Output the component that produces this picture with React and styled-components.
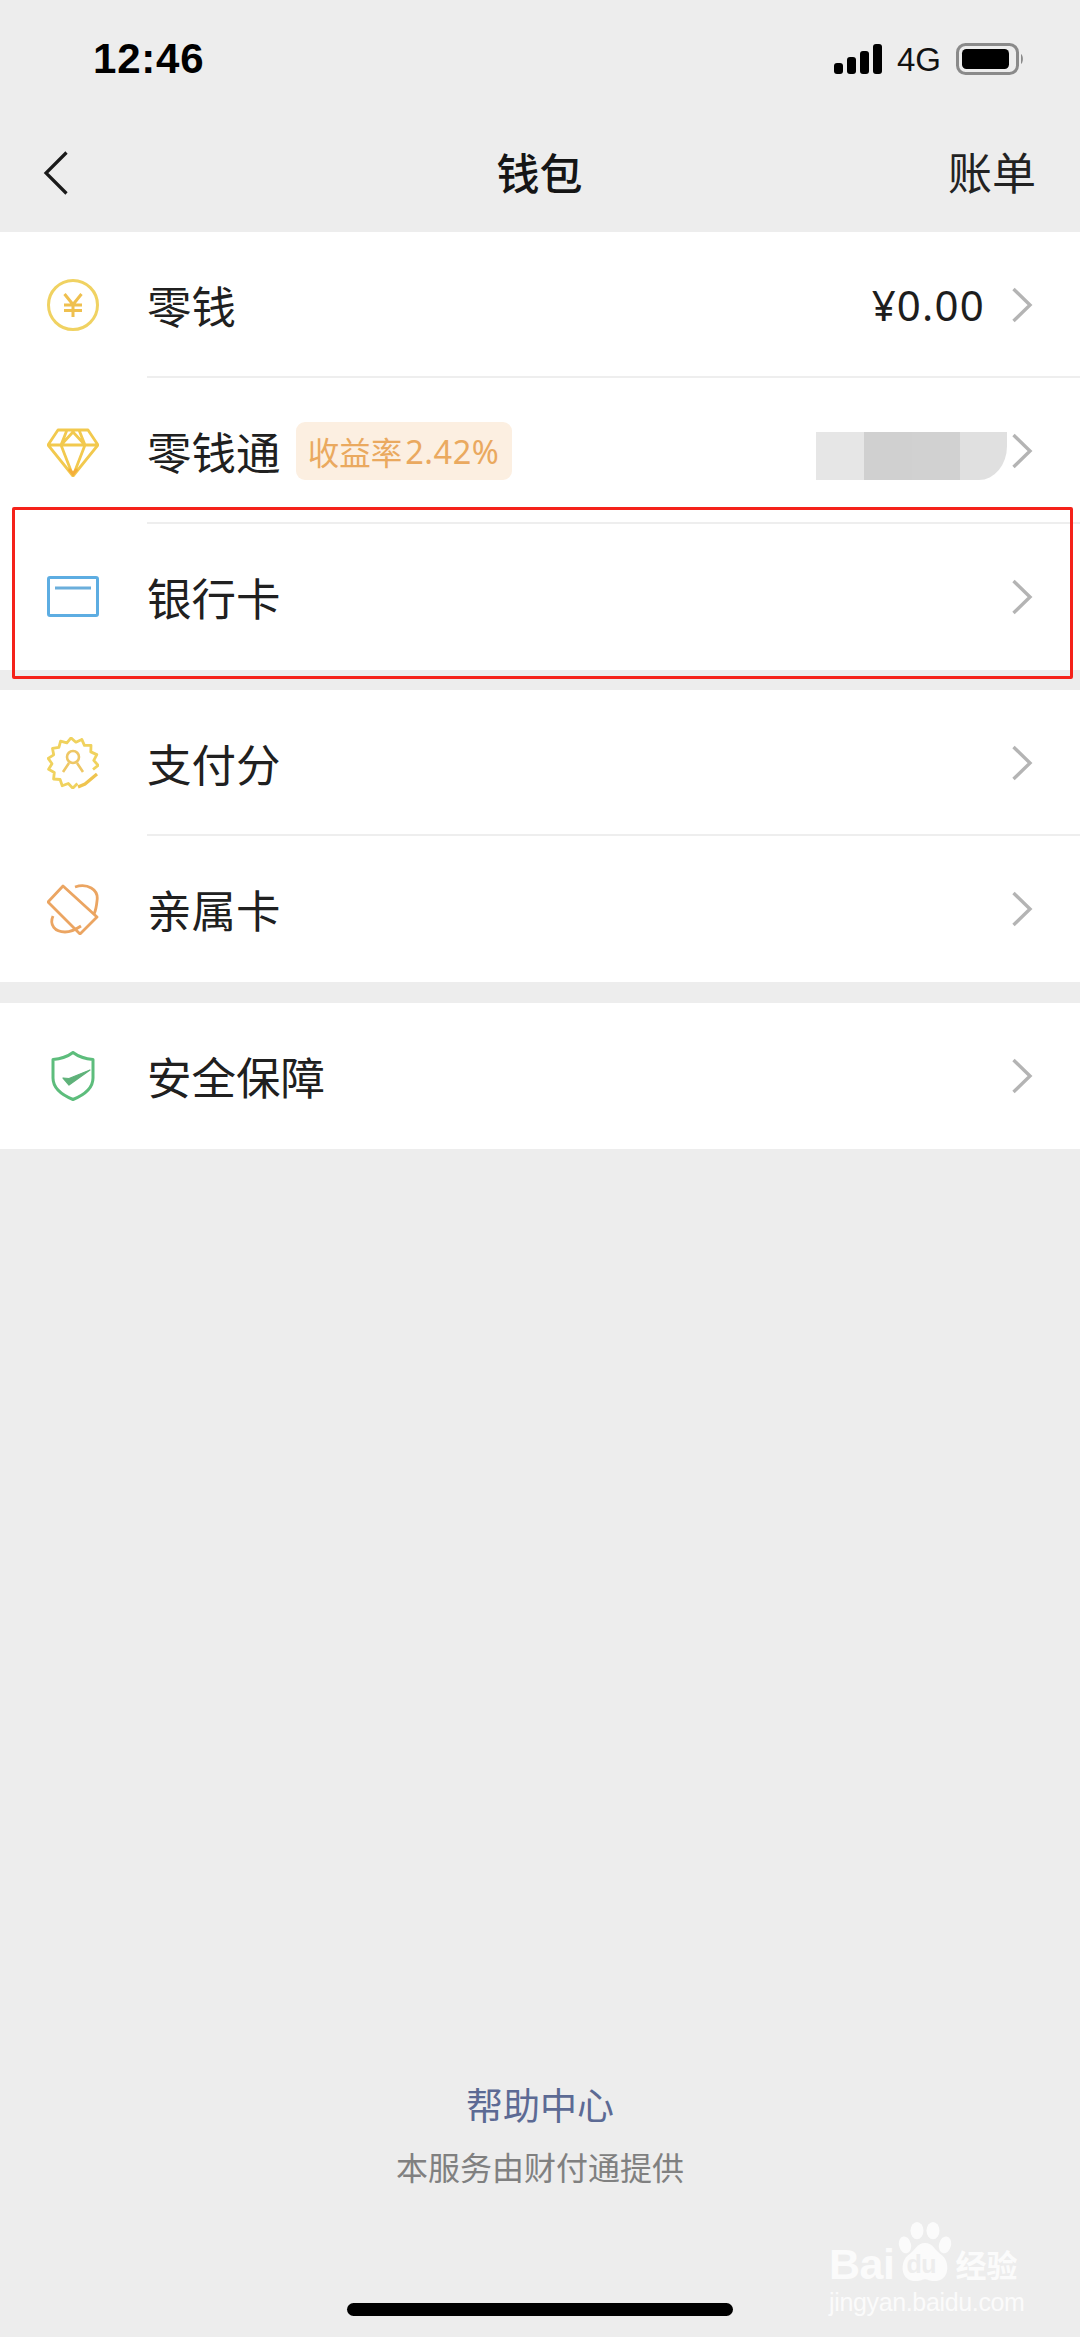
import React from "react";
import styled, { createGlobalStyle } from "styled-components";

const CJK = `"Noto Sans CJK SC", "Liberation Sans", sans-serif`;
const LATIN = `"Liberation Sans", "Noto Sans CJK SC", sans-serif`;
const NOTO = `"Noto Sans", "Liberation Sans", sans-serif`;

const Global = createGlobalStyle`
  html, body { margin: 0; padding: 0; background: #ededed; }
  * { box-sizing: border-box; }
`;

const Page = styled.div`
  position: relative;
  width: 1080px;
  height: 2337px;
  overflow: hidden;
  display: flex;
  flex-direction: column;
  background: #ededed;
  font-family: ${CJK};
  color: #1c1c1c;
`;

const StatusBar = styled.div`
  height: 118px;
  padding: 0 56px 0 93px;
  display: flex;
  align-items: center;
  justify-content: space-between;
  color: #000;
`;
const Clock = styled.span`
  font: 700 42px/1 ${LATIN};
  letter-spacing: 0.8px;
`;
const StatusRight = styled.div`
  display: flex;
  align-items: center;
  gap: 15px;
`;
const Network = styled.span`
  font: 400 33px/1 ${LATIN};
  color: #111;
`;

const NavBar = styled.div`
  height: 114px;
  padding: 0 44px 8px 43px;
  display: grid;
  grid-template-columns: 1fr auto 1fr;
  align-items: center;
  svg { margin-top: 3px; }
`;
const NavTitle = styled.div`
  font-size: 43px;
  font-weight: 500;
  line-height: 1;
  color: #151515;
`;
const NavAction = styled.div`
  justify-self: end;
  font-size: 44px;
  line-height: 1;
  color: #222;
`;

const Group = styled.section`
  background: #fff;
  margin-top: ${(p) => p.$gap || 0}px;
`;
const Row = styled.div`
  height: 146px;
  padding: 0 47px 0 47px;
  display: flex;
  align-items: center;
  position: relative;
  ${(p) =>
    p.$divider
      ? `&::after { content: ""; position: absolute; left: 147px; right: 0; bottom: 0; height: 2px; background: #eeeeee; }`
      : ""}
`;
const IconBox = styled.div`
  width: 52px;
  height: 52px;
  margin-right: 48px;
  flex: none;
  display: flex;
  align-items: center;
  justify-content: center;
`;
const Label = styled.span`
  font-size: 44.5px;
  line-height: 1;
  color: #202020;
`;
const Badge = styled.span`
  margin-left: 15px;
  width: 216px;
  height: 58px;
  border-radius: 9px;
  background: #fcefe1;
  color: #eaa95f;
  font-size: 31.5px;
  display: flex;
  align-items: center;
  justify-content: center;
  white-space: nowrap;
`;
const Percent = styled.span`
  font-family: ${NOTO};
  font-size: 32.5px;
  letter-spacing: 0.5px;
  margin-left: 3px;
`;
const Right = styled.div`
  margin-left: auto;
  display: flex;
  align-items: center;
`;
const Amount = styled.span`
  font: 400 42px/1 ${NOTO};
  letter-spacing: 1.2px;
  color: #1d1d1d;
  margin-right: 26px;
`;
const Censor = styled.div`
  display: flex;
  margin-right: 4px;
  margin-top: 10px;
  height: 48px;
`;
const CensorCell = styled.span`
  width: 48px;
  height: 48px;
  background: ${(p) => p.$tone};
  ${(p) => (p.$round ? "width: 47px; border-bottom-right-radius: 28px 34px;" : "")}
`;

const Footer = styled.footer`
  margin-top: auto;
  padding-bottom: 21px;
  display: flex;
  flex-direction: column;
  align-items: center;
`;
const HelpLink = styled.div`
  font-size: 37px;
  line-height: 1;
  color: #5c6a94;
`;
const Provider = styled.div`
  margin-top: 27px;
  font-size: 32px;
  line-height: 1;
  color: #808080;
`;
const HomeBar = styled.div`
  margin-top: 121px;
  width: 386px;
  height: 13px;
  border-radius: 7px;
  background: #000;
`;

const Highlight = styled.div`
  position: absolute;
  left: 12px;
  top: 507px;
  width: 1061px;
  height: 172px;
  border: 3px solid #f5221a;
  border-radius: 2px;
`;

const Watermark = styled.div`
  position: absolute;
  left: 829px;
  top: 2222px;
  width: 196px;
  color: #fbfbfb;
`;
const MarkTop = styled.div`
  height: 61px;
  display: flex;
  align-items: flex-end;
  position: relative;
`;
const Bai = styled.span`
  font: 700 43px/38px ${LATIN};
  letter-spacing: -0.5px;
`;
const Paw = styled.div`
  width: 54px;
  height: 61px;
  margin: 0 3px 0 4px;
  flex: none;
  position: relative;
`;
const Du = styled.span`
  position: absolute;
  left: 8px;
  bottom: 6px;
  font: 700 25px/1 ${LATIN};
  color: #ededed;
  letter-spacing: -0.5px;
`;
const MarkCn = styled.span`
  font-size: 31px;
  font-weight: 700;
  line-height: 38px;
  white-space: nowrap;
`;
const MarkUrl = styled.div`
  margin-top: 5px;
  font: 400 25px/28px ${LATIN};
  letter-spacing: -0.35px;
  white-space: nowrap;
`;

const Chevron = () => (
  <svg width="22" height="36" viewBox="0 0 22 36" fill="none">
    <path d="M2.5 2 L19 18 L2.5 34" stroke="#b4b4b4" strokeWidth="3.4" />
  </svg>
);

const BackArrow = () => (
  <svg width="26" height="44" viewBox="0 0 26 44" fill="none">
    <path d="M23.5 1.5 L3 22 L23.5 42.5" stroke="#1a1a1a" strokeWidth="3.2" />
  </svg>
);

const Signal = () => (
  <svg width="48" height="30" viewBox="0 0 48 30" fill="#000">
    <rect x="0" y="19" width="9" height="11" rx="3" />
    <rect x="13" y="13" width="9" height="17" rx="3" />
    <rect x="26" y="7" width="9" height="23" rx="3" />
    <rect x="39" y="0" width="9" height="30" rx="3" />
  </svg>
);

const Battery = () => (
  <svg width="68" height="32" viewBox="0 0 68 32">
    <rect x="1.5" y="1.5" width="60" height="29" rx="8" fill="none" stroke="#8a8a8a" strokeWidth="3" />
    <rect x="6" y="6" width="47" height="20" rx="4.5" fill="#000" />
    <path d="M65 11 C67.5 12.5 67.5 19.5 65 21 Z" fill="#8a8a8a" />
  </svg>
);

const CoinIcon = () => (
  <svg width="52" height="52" viewBox="0 0 52 52" fill="none">
    <circle cx="26" cy="26" r="24.5" stroke="#f0d262" strokeWidth="3" />
    <path d="M17.5 15 L26 25.5 L34.5 15 M17 26 H35 M17 31.5 H35 M26 25.5 V38" stroke="#efc04f" strokeWidth="3" />
  </svg>
);

const DiamondIcon = () => (
  <svg width="52" height="52" viewBox="0 0 52 52" fill="none">
    <path
      d="M11 5 H41 L51 20 L26 51 L1 20 Z M1 20 H51 M14 20 L26 51 L38 20 M14 20 L20 5 M38 20 L32 5 M14 20 L26 7 L38 20"
      stroke="#f2c94e"
      strokeWidth="2.8"
      strokeLinejoin="round"
    />
    <path d="M22 44 L26 49 L30 44" stroke="#f5ae3a" strokeWidth="3" />
  </svg>
);

const CardIcon = () => (
  <svg width="52" height="42" viewBox="0 0 52 42" fill="none">
    <rect x="1.5" y="1.5" width="49" height="38" rx="1.5" stroke="#5dade2" strokeWidth="3" />
    <path d="M8 12 H44" stroke="#6aaedb" strokeWidth="2.8" />
  </svg>
);

// star outline: 12 teeth, left open at the lower right where the tick stroke runs
const starPath = (() => {
  const pts = [];
  const start = 18;
  const end = 300;
  const steps = 24;
  for (let i = 0; i <= steps; i++) {
    const deg = start - (end * i) / steps;
    const r = i % 2 === 0 ? 21 : 25.2;
    const a = (deg * Math.PI) / 180;
    pts.push(`${(26 + r * Math.cos(a)).toFixed(1)} ${(26 + r * Math.sin(a)).toFixed(1)}`);
  }
  return "M" + pts.join(" L");
})();

const ScoreIcon = () => (
  <svg width="52" height="52" viewBox="0 0 52 52" fill="none">
    <path d={starPath} stroke="#f0d25e" strokeWidth="2.8" strokeLinejoin="round" />
    <path d="M31 50 L38 47 L50 37" stroke="#efc44f" strokeWidth="3.2" />
    <circle cx="26" cy="20" r="6" stroke="#eec765" strokeWidth="2.6" />
    <path d="M22 26 L16 35 M30 26 L36 35" stroke="#eec765" strokeWidth="2.6" strokeLinejoin="round" />
  </svg>
);

const FamilyIcon = () => (
  <svg width="52" height="52" viewBox="0 0 52 52" fill="none">
    <path d="M16 3 L50 34 L33 51 L1 19 Z" stroke="#eba562" strokeWidth="2.8" strokeLinejoin="round" />
    <path d="M28 4 C40 0 52 6 50 18 C49.5 23 49 27 47 31" stroke="#eba562" strokeWidth="2.8" />
    <path d="M6 33 C2 42 8 49 18 49 C24 49 28 47 34 43" stroke="#eba562" strokeWidth="2.8" />
  </svg>
);

const ShieldIcon = () => (
  <svg width="44" height="50" viewBox="0 0 44 50" fill="none">
    <path d="M22 1.5 C28 6 35 8 42 8.5 V27 C42 37 33 44 22 48.5 C11 44 2 37 2 27 V8.5 C9 8 16 6 22 1.5 Z" stroke="#5dbd7c" strokeWidth="3" strokeLinejoin="round" />
    <path d="M12 27 L18 27.5 L39 19 L18 34 Z" fill="#5fb27a" stroke="#5fb27a" strokeWidth="1.2" strokeLinejoin="round" />
  </svg>
);

const PawShape = () => (
  <svg width="54" height="61" viewBox="0 0 54 64" fill="#fbfbfb" preserveAspectRatio="none">
    <ellipse cx="7" cy="24" rx="6" ry="9" transform="rotate(-12 7 24)" />
    <ellipse cx="19" cy="9" rx="6.5" ry="9" />
    <ellipse cx="35" cy="9" rx="6.5" ry="9" />
    <ellipse cx="47" cy="24" rx="6" ry="9" transform="rotate(12 47 24)" />
    <path d="M27 22 C35 22 37 30 43 34 C52 40 53 62 36 62 C31 62 30 60 27 60 C24 60 23 62 18 62 C1 62 2 40 11 34 C17 30 19 22 27 22 Z" />
  </svg>
);

export default function App() {
  return (
    <Page>
      <Global />
      <StatusBar>
        <Clock>12:46</Clock>
        <StatusRight>
          <Signal />
          <Network>4G</Network>
          <Battery />
        </StatusRight>
      </StatusBar>
      <NavBar>
        <BackArrow />
        <NavTitle>钱包</NavTitle>
        <NavAction>账单</NavAction>
      </NavBar>

      <Group>
        <Row $divider>
          <IconBox><CoinIcon /></IconBox>
          <Label>零钱</Label>
          <Right>
            <Amount>¥0.00</Amount>
            <Chevron />
          </Right>
        </Row>
        <Row $divider>
          <IconBox><DiamondIcon /></IconBox>
          <Label>零钱通</Label>
          <Badge>收益率<Percent>2.42%</Percent></Badge>
          <Right>
            <Censor>
              <CensorCell $tone="#e6e6e6" />
              <CensorCell $tone="#d0d0d0" />
              <CensorCell $tone="#d1d1d1" />
              <CensorCell $tone="#e0e0e0" $round />
            </Censor>
            <Chevron />
          </Right>
        </Row>
        <Row>
          <IconBox><CardIcon /></IconBox>
          <Label>银行卡</Label>
          <Right><Chevron /></Right>
        </Row>
      </Group>

      <Group $gap={20}>
        <Row $divider>
          <IconBox><ScoreIcon /></IconBox>
          <Label>支付分</Label>
          <Right><Chevron /></Right>
        </Row>
        <Row>
          <IconBox><FamilyIcon /></IconBox>
          <Label>亲属卡</Label>
          <Right><Chevron /></Right>
        </Row>
      </Group>

      <Group $gap={21}>
        <Row>
          <IconBox><ShieldIcon /></IconBox>
          <Label>安全保障</Label>
          <Right><Chevron /></Right>
        </Row>
      </Group>

      <Footer>
        <HelpLink>帮助中心</HelpLink>
        <Provider>本服务由财付通提供</Provider>
        <HomeBar />
      </Footer>

      <Highlight />

      <Watermark>
        <MarkTop>
          <Bai>Bai</Bai>
          <Paw>
            <PawShape />
            <Du>du</Du>
          </Paw>
          <MarkCn>经验</MarkCn>
        </MarkTop>
        <MarkUrl>jingyan.baidu.com</MarkUrl>
      </Watermark>
    </Page>
  );
}
